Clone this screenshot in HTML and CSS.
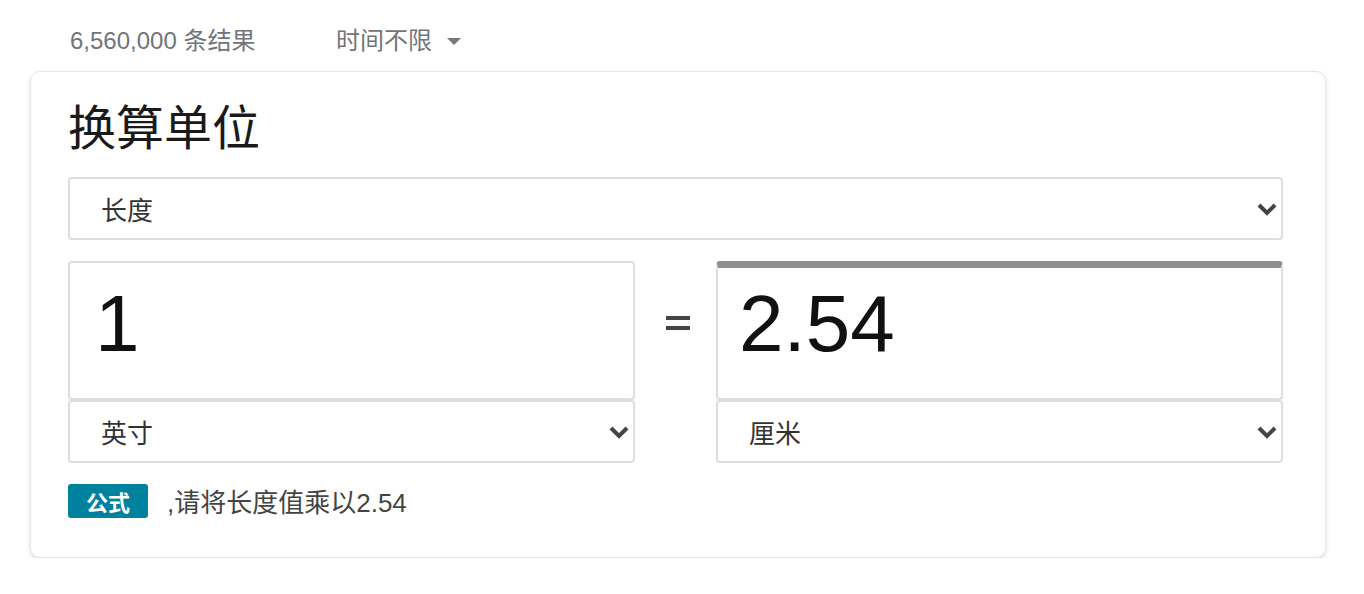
FILE: index.html
```html
<!DOCTYPE html>
<html lang="zh">
<head>
<meta charset="utf-8">
<link rel="stylesheet" href="styles.css">
</head>
<body>
<div class="topbar">
  <span class="count">6,560,000 条结果</span>
  <span class="time">时间不限 <span class="tri"></span></span>
</div>
<div class="card">
  <h1 class="title">换算单位</h1>
  <div class="select wide"><span>长度</span>
    <svg class="chev" width="20" height="14" viewBox="0 0 20 14"><path d="M2 3 L10 11 L18 3" fill="none" stroke="#444" stroke-width="4"/></svg>
  </div>
  <div class="grid">
    <div class="col">
      <div class="valbox"><span>1</span></div>
      <div class="select"><span>英寸</span>
        <svg class="chev" width="20" height="14" viewBox="0 0 20 14"><path d="M2 3 L10 11 L18 3" fill="none" stroke="#444" stroke-width="4"/></svg>
      </div>
    </div>
    <div class="eq"><span class="eqbar"></span><span class="eqbar"></span></div>
    <div class="col">
      <div class="valbox result"><span>2.54</span></div>
      <div class="select"><span>厘米</span>
        <svg class="chev" width="20" height="14" viewBox="0 0 20 14"><path d="M2 3 L10 11 L18 3" fill="none" stroke="#444" stroke-width="4"/></svg>
      </div>
    </div>
  </div>
  <div class="formula">
    <span class="badge">公式</span>
    <span class="ftext">,请将长度值乘以2.54</span>
  </div>
</div>
</body>
</html>
```

FILE: styles.css
```css
* { box-sizing: border-box; }
body {
  margin: 0;
  background: #fff;
  font-family: "Liberation Sans", Arial, "Noto Sans CJK SC", sans-serif;
}
.topbar {
  height: 71px;
  display: flex;
  align-items: flex-start;
  padding: 27px 0 0 70px;
  color: #70757a;
  font-size: 24px;
  line-height: 28px;
}
.count { width: 266px; }
.time { display: flex; align-items: center; }
.tri {
  display: inline-block;
  margin-left: 15px;
  width: 0; height: 0;
  border-left: 7px solid transparent;
  border-right: 7px solid transparent;
  border-top: 7px solid #777;
}
.card {
  margin-left: 30px;
  width: 1296px;
  height: 487px;
  border: 1px solid #e6e6e6;
  border-radius: 10px;
  box-shadow: 0 2px 4px rgba(0,0,0,0.14);
  padding: 27px 42px 0 37px;
}
.title {
  margin: 0;
  font-weight: normal;
  font-size: 48px;
  line-height: 60px;
  color: #1a1a1a;
  height: 78px;
}
.select {
  height: 63px;
  border: 2px solid #dedede;
  border-radius: 4px;
  display: flex;
  align-items: center;
  justify-content: space-between;
  padding: 0 4px 0 31px;
  font-size: 26px;
  color: #333;
}
.grid {
  display: grid;
  grid-template-columns: 567px 1fr 567px;
  margin-top: 21px;
}
.col { display: flex; flex-direction: column; }
.valbox {
  height: 139px;
  border: 2px solid #dedede;
  border-radius: 4px;
  padding: 11px 0 0 25px;
  font-size: 80px;
  line-height: 100px;
  color: #111;
}
.valbox.result {
  border-top: 7px solid #8f8f8f;
  padding: 6px 0 0 21px;
}
.eq {
  display: flex;
  flex-direction: column;
  align-items: center;
  gap: 6px;
  padding: 55px 0 0 4px;
}
.eqbar {
  display: block;
  width: 24px;
  height: 4px;
  background: #444;
}
.formula {
  display: flex;
  align-items: center;
  margin-top: 19px;
}
.badge {
  width: 80px;
  height: 34px;
  background: #00819e;
  color: #fff;
  border-radius: 3px;
  font-weight: bold;
  font-size: 22px;
  display: flex;
  align-items: center;
  justify-content: center;
}
.ftext {
  margin-left: 19px;
  font-size: 26px;
  color: #444;
}
```
